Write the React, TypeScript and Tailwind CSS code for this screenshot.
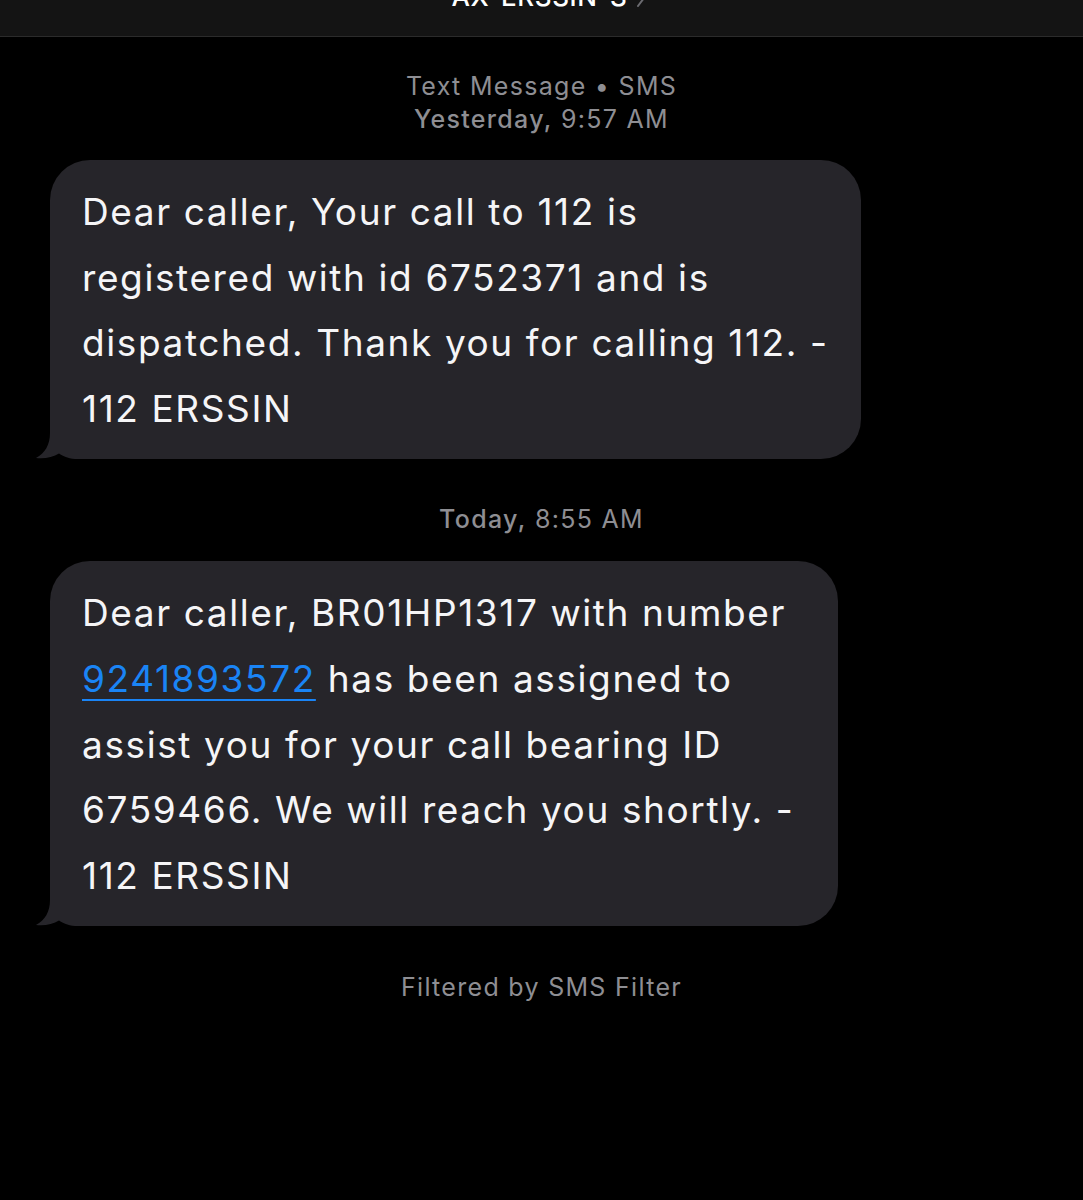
import React from "react"

const font = { fontFamily: "Inter, 'Noto Sans', sans-serif" }

function Tail() {
  return (
    <svg
      className="absolute left-[-16px] bottom-0"
      width="56"
      height="44"
      viewBox="0 0 56 44"
    >
      <path
        d="M16 0 H56 V44 H44 C36 44 30 42 25 38.5 C19 42.5 10 44 2 43 C11 38 16 30 16 18 Z"
        fill="#26252a"
      />
    </svg>
  )
}

function Bubble({ width, children }: { width: string; children: React.ReactNode }) {
  return (
    <div className={`relative ml-[50px] rounded-[40px] bg-[#26252a] px-[32px] pt-[19px] pb-[18px] ${width}`}>
      <div className="relative z-10 whitespace-nowrap text-[37px] leading-[65.6px] font-normal text-[#f5f5f7] tracking-[1.6px]">
        {children}
      </div>
      <Tail />
    </div>
  )
}

function Stamp({ children, className = "" }: { children: React.ReactNode; className?: string }) {
  return (
    <div className={`text-center text-[25px] leading-[33px] font-normal tracking-[1.3px] text-[#8e8e93] ${className}`}>
      {children}
    </div>
  )
}

export default function App() {
  return (
    <div className="min-h-[1200px] w-full bg-black" style={font}>
      <header className="h-[37px] overflow-hidden border-b border-[#2b2b2b] bg-[#141414]">
        <div className="mt-[-16px] flex items-center justify-center gap-[8px] pl-[14px] text-[26px] leading-[26px] font-medium tracking-[0.6px] text-white">
          <span>AX-ERSSIN-S</span>
          <svg width="10" height="18" viewBox="0 0 10 18" className="mt-[2px]">
            <path d="M2 1 L8 9 L2 17" stroke="#6b6b70" strokeWidth="2" fill="none" strokeLinecap="round" />
          </svg>
        </div>
      </header>

      <Stamp className="mt-[33px]">
        <div>Text Message • SMS</div>
        <div>
          <span className="font-medium">Yesterday,</span> 9:57 AM
        </div>
      </Stamp>

      <div className="mt-[24px]">
        <Bubble width="w-[811px]">
          <div>Dear caller, Your call to 112 is</div>
          <div>registered with id 6752371 and is</div>
          <div>dispatched. Thank you for calling 112. -</div>
          <div>112 ERSSIN</div>
        </Bubble>
      </div>

      <Stamp className="mt-[44px]">
        <span className="font-medium">Today,</span> 8:55 AM
      </Stamp>

      <div className="mt-[25px]">
        <Bubble width="w-[788px]">
          <div>Dear caller, BR01HP1317 with number</div>
          <div>
            <span className="text-[#1a84f5] underline decoration-[2px] underline-offset-[7px]">9241893572</span> has been assigned to
          </div>
          <div>assist you for your call bearing ID</div>
          <div>6759466. We will reach you shortly. -</div>
          <div>112 ERSSIN</div>
        </Bubble>
      </div>

      <Stamp className="mt-[45px] font-medium">Filtered by SMS Filter</Stamp>
    </div>
  )
}
